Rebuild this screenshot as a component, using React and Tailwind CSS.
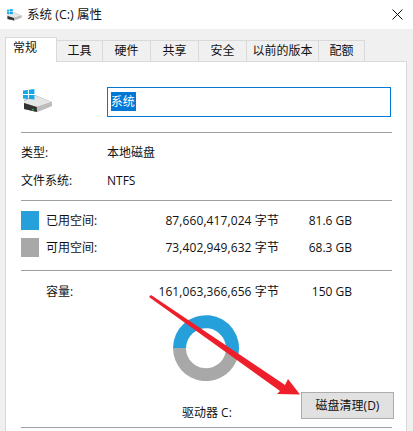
import React from "react";

const font = { fontFamily: '"Open Sans", "Noto Sans CJK SC", sans-serif' };

//drive with the windows logo
const DriveIcon = ({ className }) => (
  <svg viewBox="0 0 30 24" className={className}>
    <path d="M1 11 L12 6 L29 13 L29 17 L14 23 L1 20 Z" fill="#a9a9a9" />
    <path d="M1 12 L12 6.5 L28.5 13 L14 18 L1 14 Z" fill="#e6e6e6" />
    <path d="M14 18 L29 13 L29 17 L14 23 Z" fill="#bdbdbd" />
    <path d="M1 14 L14 18 L14 23 L1 20 Z" fill="#333333" />
    <rect x="9" y="20" width="2" height="1.5" fill="#22b14c" />
    <path d="M0 1.5 L5 0.8 L5 5 L0 5 Z" fill="#12a9ea" />
    <path d="M6 0.7 L11.5 0 L11.5 5 L6 5 Z" fill="#12a9ea" />
    <path d="M0 6 L5 6 L5 10 L0 9.5 Z" fill="#12a9ea" />
    <path d="M6 6 L11.5 6 L11.5 10.5 L6 10 Z" fill="#12a9ea" />
  </svg>
);

const tabs = [
  { name: "工具", w: "w-[47px]" },
  { name: "硬件", w: "w-[49px]" },
  { name: "共享", w: "w-[49px]" },
  { name: "安全", w: "w-[49px]" },
  { name: "以前的版本", w: "w-[73px]" },
  { name: "配额", w: "w-[47px]" },
];

const App = () => {
  return (
    <div
      className="relative w-[413px] h-[431px] overflow-hidden flex flex-col bg-[#f0f0f0] text-[12px] leading-[16px] text-[#111]"
      style={font}
    >
      {/* title bar */}
      <div className="h-[29px] shrink-0 bg-white flex items-center pl-[7px] pr-[10px]">
        <DriveIcon className="w-[15px] h-[12px]" />
        <span className="ml-[5px] flex-1 text-[12.5px]">系统 (C:) 属性</span>
        <svg viewBox="0 0 11 11" className="w-[11px] h-[11px]">
          <path d="M0.5 0.5 L10.5 10.5 M10.5 0.5 L0.5 10.5" stroke="#111" strokeWidth="1" fill="none" />
        </svg>
      </div>

      {/* tabs */}
      <div className="h-[33px] shrink-0 flex items-end pl-[5px] relative z-10 -mb-px">
        <div className="w-[52px] h-[25px] bg-white border border-b-0 border-[#d9d9d9] pl-[7px] pt-[2px] relative z-10">常规</div>
        {tabs.map((tab) => (
          <div
            key={tab.name}
            className={`${tab.w} h-[22px] -ml-px border border-[#d9d9d9] flex items-center justify-center`}
          >
            {tab.name}
          </div>
        ))}
      </div>

      {/* panel */}
      <div className="flex-1 ml-[5px] w-[402px] bg-white border border-b-0 border-[#d9d9d9] pl-[15px] pr-[15px] pt-[25px]">
        <div className="flex items-start h-[30px]">
          <DriveIcon className="ml-[2px] mt-[2px] w-[30px] h-[24px]" />
          <div className="ml-[54px] w-[287px] h-[30px] border border-[#0078d7] pl-[3px] pt-[4px]">
            <span className="block w-[25px] bg-[#0078d7] text-white h-[19px] leading-[19px]">系统</span>
          </div>
        </div>

        <div className="mt-[15px] border-t border-[#a0a0a0] w-[371px]" />

        <div className="flex mt-[12px] h-[16px]">
          <span className="w-[86px]">类型:</span>
          <span>本地磁盘</span>
        </div>
        <div className="flex mt-[12px] h-[16px]">
          <span className="w-[86px]">文件系统:</span>
          <span>NTFS</span>
        </div>

        <div className="mt-[11px] border-t border-[#a0a0a0] w-[371px]" />

        <div className="flex items-center mt-[10px] h-[19px]">
          <div className="w-[18px] h-[19px] bg-[#26a0da]" />
          <span className="ml-[7px] w-[92px]">已用空间:</span>
          <span className="w-[141px] text-right tracking-[0.1px]">87,660,417,024 字节</span>
          <span className="w-[73px] text-right">81.6 GB</span>
        </div>
        <div className="flex items-center mt-[8px] h-[19px]">
          <div className="w-[18px] h-[19px] bg-[#a8a8a8]" />
          <span className="ml-[7px] w-[92px]">可用空间:</span>
          <span className="w-[141px] text-right tracking-[0.1px]">73,402,949,632 字节</span>
          <span className="w-[73px] text-right">68.3 GB</span>
        </div>

        <div className="mt-[13px] border-t border-[#a0a0a0] w-[371px]" />

        <div className="flex items-center mt-[13px] h-[16px]">
          <span className="ml-[25px] w-[92px]">容量:</span>
          <span className="w-[141px] text-right tracking-[0.1px]">161,063,366,656 字节</span>
          <span className="w-[73px] text-right">150 GB</span>
        </div>

        <div className="flex mt-[8px] ml-[152px]">
          <svg viewBox="0 0 66 66" className="mt-[7px] w-[66px] h-[66px] shrink-0">
            <path d="M0 33 A33 33 0 1 1 65.3 39.9 L52.6 37.2 A20 20 0 1 0 13 33 Z" fill="#26a0da" />
            <path d="M0 33 A33 33 0 0 0 65.3 39.9 L52.6 37.2 A20 20 0 0 1 13 33 Z" fill="#a8a8a8" />
          </svg>
        </div>

        <div className="flex items-end w-[373px] mt-[11px] h-[27px]">
          <span className="ml-[161px] mb-[-2px]">驱动器 C:</span>
          <button className="ml-auto w-[93px] h-[27px] bg-[#e1e1e1] border border-[#adadad] text-[12px]">
            磁盘清理(D)
          </button>
        </div>

        <div className="mt-[8px] border-t border-[#a0a0a0] w-[371px]" />
      </div>

      {/* red arrow drawn over the dialog */}
      <svg viewBox="0 0 413 431" className="absolute inset-0 w-[413px] h-[431px] pointer-events-none">
        <path d="M149 297 L151 295 L285 385 L288 379 L300 394.5 L277 394 L280 391 Z" fill="#ee1f2b" />
      </svg>
    </div>
  );
};

export default App;
